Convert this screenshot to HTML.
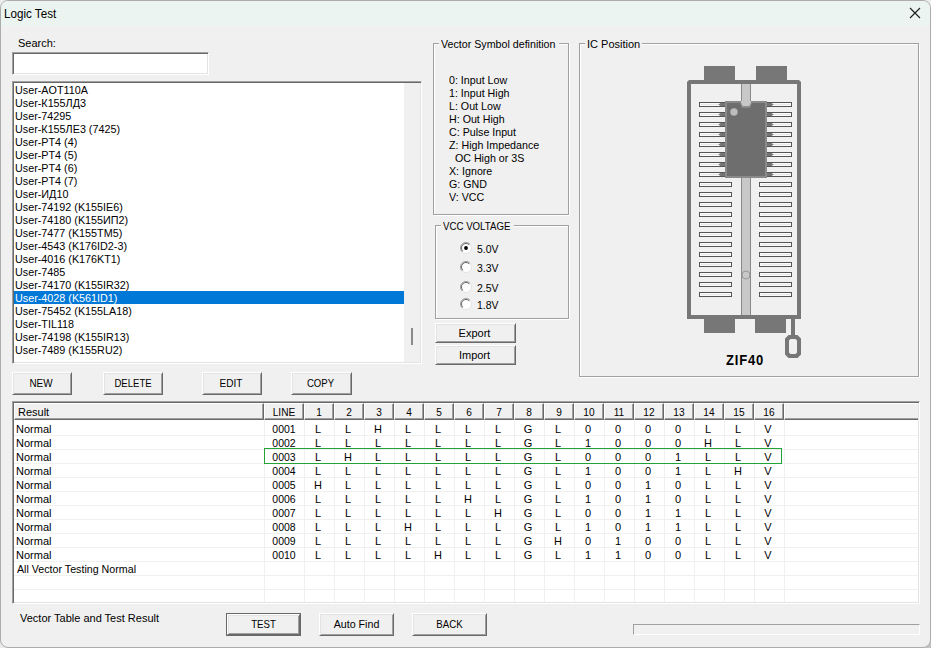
<!DOCTYPE html><html><head><meta charset="utf-8"><style>
html,body{margin:0;padding:0;}
body{width:931px;height:648px;position:relative;overflow:hidden;background:#ececec;font-family:'Liberation Sans', sans-serif;}
.t{position:absolute;white-space:nowrap;line-height:13px;font-family:'Liberation Sans', sans-serif;color:#000;}
</style></head><body>
<div style="position:absolute;left:905px;top:622px;width:26px;height:26px;background:#c2c2c2;"></div>
<div style="position:absolute;left:0px;top:0px;width:931px;height:648px;box-sizing:border-box;border:1px solid #acacac;border-radius:8px;background:#f0f0f0;overflow:hidden;"></div>
<div style="position:absolute;left:1px;top:1px;width:929px;height:25px;background:#ebf4f0;border-radius:7px 7px 0 0;"></div>
<div class="t" style="left:4px;top:7px;font-size:12px;line-height:14px;transform:scaleX(0.97);transform-origin:0 0;">Logic Test</div>
<svg style="position:absolute;left:0;top:0" width="931" height="30"><path d="M910 8 L920 18 M920 8 L910 18" stroke="#1b1b1b" stroke-width="1.1" fill="none"/></svg>
<div class="t" style="left:18px;top:37px;font-size:11px;font-weight:normal;color:#000;">Search:</div>
<div style="position:absolute;left:12px;top:52px;width:197px;height:23px;box-sizing:border-box;border-style:solid;border-width:1px;border-color:#a0a0a0 #fff #fff #a0a0a0;background:#fff;box-shadow:inset 1px 1px 0 #696969, inset -1px -1px 0 #e3e3e3;"></div>
<div style="position:absolute;left:12px;top:81px;width:410px;height:283px;box-sizing:border-box;border-style:solid;border-width:1px;border-color:#a0a0a0 #fff #fff #a0a0a0;background:#fff;box-shadow:inset 1px 1px 0 #696969, inset -1px -1px 0 #e3e3e3;"></div>
<div style="position:absolute;left:404px;top:83px;width:16px;height:279px;background:#f0f0f0;"></div>
<div style="position:absolute;left:411px;top:328px;width:2px;height:17px;background:#8a8a8a;"></div>
<div class="t" style="left:15px;top:84px;font-size:11px;transform:scaleX(0.98);transform-origin:0 0;">User-AOT110A</div>
<div class="t" style="left:15px;top:97px;font-size:11px;transform:scaleX(0.98);transform-origin:0 0;">User-К155ЛД3</div>
<div class="t" style="left:15px;top:110px;font-size:11px;transform:scaleX(0.98);transform-origin:0 0;">User-74295</div>
<div class="t" style="left:15px;top:123px;font-size:11px;transform:scaleX(0.98);transform-origin:0 0;">User-К155ЛЕ3 (7425)</div>
<div class="t" style="left:15px;top:136px;font-size:11px;transform:scaleX(0.98);transform-origin:0 0;">User-PT4 (4)</div>
<div class="t" style="left:15px;top:149px;font-size:11px;transform:scaleX(0.98);transform-origin:0 0;">User-PT4 (5)</div>
<div class="t" style="left:15px;top:162px;font-size:11px;transform:scaleX(0.98);transform-origin:0 0;">User-PT4 (6)</div>
<div class="t" style="left:15px;top:175px;font-size:11px;transform:scaleX(0.98);transform-origin:0 0;">User-PT4 (7)</div>
<div class="t" style="left:15px;top:188px;font-size:11px;transform:scaleX(0.98);transform-origin:0 0;">User-ИД10</div>
<div class="t" style="left:15px;top:201px;font-size:11px;transform:scaleX(0.98);transform-origin:0 0;">User-74192 (K155IE6)</div>
<div class="t" style="left:15px;top:214px;font-size:11px;transform:scaleX(0.98);transform-origin:0 0;">User-74180 (K155ИП2)</div>
<div class="t" style="left:15px;top:227px;font-size:11px;transform:scaleX(0.98);transform-origin:0 0;">User-7477 (K155TM5)</div>
<div class="t" style="left:15px;top:240px;font-size:11px;transform:scaleX(0.98);transform-origin:0 0;">User-4543 (K176ID2-3)</div>
<div class="t" style="left:15px;top:253px;font-size:11px;transform:scaleX(0.98);transform-origin:0 0;">User-4016 (K176KT1)</div>
<div class="t" style="left:15px;top:266px;font-size:11px;transform:scaleX(0.98);transform-origin:0 0;">User-7485</div>
<div class="t" style="left:15px;top:279px;font-size:11px;transform:scaleX(0.98);transform-origin:0 0;">User-74170 (K155IR32)</div>
<div style="position:absolute;left:14px;top:291px;width:390px;height:13px;background:#0078d7;"></div>
<div class="t" style="left:15px;top:292px;font-size:11px;color:#fff;transform:scaleX(0.98);transform-origin:0 0;">User-4028 (K561ID1)</div>
<div class="t" style="left:15px;top:305px;font-size:11px;transform:scaleX(0.98);transform-origin:0 0;">User-75452 (K155LA18)</div>
<div class="t" style="left:15px;top:318px;font-size:11px;transform:scaleX(0.98);transform-origin:0 0;">User-TIL118</div>
<div class="t" style="left:15px;top:331px;font-size:11px;transform:scaleX(0.98);transform-origin:0 0;">User-74198 (K155IR13)</div>
<div class="t" style="left:15px;top:344px;font-size:11px;transform:scaleX(0.98);transform-origin:0 0;">User-7489 (K155RU2)</div>
<div style="position:absolute;left:434px;top:44px;width:136px;height:172px;box-sizing:border-box;border:1px solid #fff;"></div>
<div style="position:absolute;left:433px;top:43px;width:136px;height:172px;box-sizing:border-box;border:1px solid #a0a0a0;"></div>
<div style="position:absolute;left:439px;top:42px;width:120px;height:4px;background:#f0f0f0;"></div>
<div class="t" style="left:441px;top:38px;font-size:11px;font-weight:normal;color:#000;transform:scaleX(0.97);transform-origin:0 0;">Vector Symbol definition</div>
<div class="t" style="left:449px;top:74px;font-size:11px;font-weight:normal;color:#000;transform:scaleX(0.97);transform-origin:0 0;">0: Input Low</div>
<div class="t" style="left:449px;top:87px;font-size:11px;font-weight:normal;color:#000;transform:scaleX(0.97);transform-origin:0 0;">1: Input High</div>
<div class="t" style="left:449px;top:100px;font-size:11px;font-weight:normal;color:#000;transform:scaleX(0.97);transform-origin:0 0;">L: Out Low</div>
<div class="t" style="left:449px;top:113px;font-size:11px;font-weight:normal;color:#000;transform:scaleX(0.97);transform-origin:0 0;">H: Out High</div>
<div class="t" style="left:449px;top:126px;font-size:11px;font-weight:normal;color:#000;transform:scaleX(0.97);transform-origin:0 0;">C: Pulse Input</div>
<div class="t" style="left:449px;top:139px;font-size:11px;font-weight:normal;color:#000;transform:scaleX(0.97);transform-origin:0 0;">Z: High Impedance</div>
<div class="t" style="left:449px;top:152px;font-size:11px;font-weight:normal;color:#000;transform:scaleX(0.97);transform-origin:0 0;">&nbsp;&nbsp;OC High or 3S</div>
<div class="t" style="left:449px;top:165px;font-size:11px;font-weight:normal;color:#000;transform:scaleX(0.97);transform-origin:0 0;">X: Ignore</div>
<div class="t" style="left:449px;top:178px;font-size:11px;font-weight:normal;color:#000;transform:scaleX(0.97);transform-origin:0 0;">G: GND</div>
<div class="t" style="left:449px;top:191px;font-size:11px;font-weight:normal;color:#000;transform:scaleX(0.97);transform-origin:0 0;">V: VCC</div>
<div style="position:absolute;left:436px;top:226px;width:134px;height:94px;box-sizing:border-box;border:1px solid #fff;"></div>
<div style="position:absolute;left:435px;top:225px;width:134px;height:94px;box-sizing:border-box;border:1px solid #a0a0a0;"></div>
<div style="position:absolute;left:441px;top:224px;width:73px;height:4px;background:#f0f0f0;"></div>
<div class="t" style="left:443px;top:220px;font-size:11px;font-weight:normal;color:#000;transform:scaleX(0.88);transform-origin:0 0;">VCC VOLTAGE</div>
<svg style="position:absolute;left:459px;top:241px" width="14" height="14" viewBox="0 0 14 14">
<circle cx="7" cy="7" r="5.5" fill="#fff" stroke="#e3e3e3" stroke-width="1"/>
<path d="M3.1 10.9 A5.5 5.5 0 0 1 10.9 3.1" stroke="#a0a0a0" stroke-width="1" fill="none"/>
<path d="M3.8 10.2 A4.5 4.5 0 0 1 10.2 3.8" stroke="#696969" stroke-width="1" fill="none"/>
<circle cx="7" cy="7" r="1.9" fill="#000"/>
</svg>
<div class="t" style="left:477px;top:243px;font-size:11px;font-weight:normal;color:#000;transform:scaleX(0.95);transform-origin:0 0;">5.0V</div>
<svg style="position:absolute;left:459px;top:260px" width="14" height="14" viewBox="0 0 14 14">
<circle cx="7" cy="7" r="5.5" fill="#fff" stroke="#e3e3e3" stroke-width="1"/>
<path d="M3.1 10.9 A5.5 5.5 0 0 1 10.9 3.1" stroke="#a0a0a0" stroke-width="1" fill="none"/>
<path d="M3.8 10.2 A4.5 4.5 0 0 1 10.2 3.8" stroke="#696969" stroke-width="1" fill="none"/>

</svg>
<div class="t" style="left:477px;top:262px;font-size:11px;font-weight:normal;color:#000;transform:scaleX(0.95);transform-origin:0 0;">3.3V</div>
<svg style="position:absolute;left:459px;top:280px" width="14" height="14" viewBox="0 0 14 14">
<circle cx="7" cy="7" r="5.5" fill="#fff" stroke="#e3e3e3" stroke-width="1"/>
<path d="M3.1 10.9 A5.5 5.5 0 0 1 10.9 3.1" stroke="#a0a0a0" stroke-width="1" fill="none"/>
<path d="M3.8 10.2 A4.5 4.5 0 0 1 10.2 3.8" stroke="#696969" stroke-width="1" fill="none"/>

</svg>
<div class="t" style="left:477px;top:282px;font-size:11px;font-weight:normal;color:#000;transform:scaleX(0.95);transform-origin:0 0;">2.5V</div>
<svg style="position:absolute;left:459px;top:297px" width="14" height="14" viewBox="0 0 14 14">
<circle cx="7" cy="7" r="5.5" fill="#fff" stroke="#e3e3e3" stroke-width="1"/>
<path d="M3.1 10.9 A5.5 5.5 0 0 1 10.9 3.1" stroke="#a0a0a0" stroke-width="1" fill="none"/>
<path d="M3.8 10.2 A4.5 4.5 0 0 1 10.2 3.8" stroke="#696969" stroke-width="1" fill="none"/>

</svg>
<div class="t" style="left:477px;top:299px;font-size:11px;font-weight:normal;color:#000;transform:scaleX(0.95);transform-origin:0 0;">1.8V</div>
<div style="position:absolute;left:435px;top:323px;width:81px;height:20px;box-sizing:border-box;border-style:solid;border-width:1px;border-color:#fff #696969 #696969 #fff;background:#f0f0f0;box-shadow:inset 1px 1px 0 #e3e3e3, inset -1px -1px 0 #a0a0a0;"></div>
<div class="t" style="left:434.0px;width:81px;text-align:center;top:327px;font-size:11px;font-weight:normal;">Export</div>
<div style="position:absolute;left:435px;top:345px;width:81px;height:20px;box-sizing:border-box;border-style:solid;border-width:1px;border-color:#fff #696969 #696969 #fff;background:#f0f0f0;box-shadow:inset 1px 1px 0 #e3e3e3, inset -1px -1px 0 #a0a0a0;"></div>
<div class="t" style="left:434.0px;width:81px;text-align:center;top:349px;font-size:11px;font-weight:normal;">Import</div>
<div style="position:absolute;left:580px;top:44px;width:340px;height:334px;box-sizing:border-box;border:1px solid #fff;"></div>
<div style="position:absolute;left:579px;top:43px;width:340px;height:334px;box-sizing:border-box;border:1px solid #a0a0a0;"></div>
<div style="position:absolute;left:585px;top:42px;width:57px;height:4px;background:#f0f0f0;"></div>
<div class="t" style="left:587px;top:38px;font-size:11px;font-weight:normal;color:#000;">IC Position</div>
<div style="position:absolute;left:12px;top:372px;width:60px;height:23px;box-sizing:border-box;border-style:solid;border-width:1px;border-color:#fff #696969 #696969 #fff;background:#f0f0f0;box-shadow:inset 1px 1px 0 #e3e3e3, inset -1px -1px 0 #a0a0a0;"></div>
<div class="t" style="left:11.0px;width:60px;text-align:center;top:377px;font-size:11px;font-weight:normal;transform:scaleX(0.9);">NEW</div>
<div style="position:absolute;left:103px;top:372px;width:60px;height:23px;box-sizing:border-box;border-style:solid;border-width:1px;border-color:#fff #696969 #696969 #fff;background:#f0f0f0;box-shadow:inset 1px 1px 0 #e3e3e3, inset -1px -1px 0 #a0a0a0;"></div>
<div class="t" style="left:102.5px;width:60px;text-align:center;top:377px;font-size:11px;font-weight:normal;transform:scaleX(0.87);">DELETE</div>
<div style="position:absolute;left:202px;top:372px;width:60px;height:23px;box-sizing:border-box;border-style:solid;border-width:1px;border-color:#fff #696969 #696969 #fff;background:#f0f0f0;box-shadow:inset 1px 1px 0 #e3e3e3, inset -1px -1px 0 #a0a0a0;"></div>
<div class="t" style="left:201.0px;width:60px;text-align:center;top:377px;font-size:11px;font-weight:normal;transform:scaleX(0.91);">EDIT</div>
<div style="position:absolute;left:291px;top:372px;width:61px;height:23px;box-sizing:border-box;border-style:solid;border-width:1px;border-color:#fff #696969 #696969 #fff;background:#f0f0f0;box-shadow:inset 1px 1px 0 #e3e3e3, inset -1px -1px 0 #a0a0a0;"></div>
<div class="t" style="left:290.0px;width:61px;text-align:center;top:377px;font-size:11px;font-weight:normal;transform:scaleX(0.87);">COPY</div>
<div style="position:absolute;left:12px;top:401px;width:908px;height:203px;box-sizing:border-box;border-style:solid;border-width:1px;border-color:#a0a0a0 #fff #fff #a0a0a0;background:#fff;box-shadow:inset 1px 1px 0 #696969, inset -1px -1px 0 #e3e3e3;"></div>
<div style="position:absolute;left:14px;top:403px;width:250px;height:17px;box-sizing:border-box;border-style:solid;border-width:1px;border-color:#fff #696969 #696969 #fff;background:#f0f0f0;box-shadow:inset -1px -1px 0 #a0a0a0;"></div>
<div class="t" style="left:18px;top:406px;font-size:11px;font-weight:normal;color:#000;">Result</div>
<div style="position:absolute;left:264px;top:403px;width:40px;height:17px;box-sizing:border-box;border-style:solid;border-width:1px;border-color:#fff #696969 #696969 #fff;background:#f0f0f0;box-shadow:inset -1px -1px 0 #a0a0a0;"></div>
<div class="t" style="left:264.0px;width:40px;text-align:center;top:406px;font-size:11px;font-weight:normal;transform:scaleX(0.92);">LINE</div>
<div style="position:absolute;left:304px;top:403px;width:30px;height:17px;box-sizing:border-box;border-style:solid;border-width:1px;border-color:#fff #696969 #696969 #fff;background:#f0f0f0;box-shadow:inset -1px -1px 0 #a0a0a0;"></div>
<div class="t" style="left:304.0px;width:30px;text-align:center;top:406px;font-size:11px;font-weight:normal;transform:scaleX(0.92);">1</div>
<div style="position:absolute;left:334px;top:403px;width:30px;height:17px;box-sizing:border-box;border-style:solid;border-width:1px;border-color:#fff #696969 #696969 #fff;background:#f0f0f0;box-shadow:inset -1px -1px 0 #a0a0a0;"></div>
<div class="t" style="left:334.0px;width:30px;text-align:center;top:406px;font-size:11px;font-weight:normal;transform:scaleX(0.92);">2</div>
<div style="position:absolute;left:364px;top:403px;width:30px;height:17px;box-sizing:border-box;border-style:solid;border-width:1px;border-color:#fff #696969 #696969 #fff;background:#f0f0f0;box-shadow:inset -1px -1px 0 #a0a0a0;"></div>
<div class="t" style="left:364.0px;width:30px;text-align:center;top:406px;font-size:11px;font-weight:normal;transform:scaleX(0.92);">3</div>
<div style="position:absolute;left:394px;top:403px;width:30px;height:17px;box-sizing:border-box;border-style:solid;border-width:1px;border-color:#fff #696969 #696969 #fff;background:#f0f0f0;box-shadow:inset -1px -1px 0 #a0a0a0;"></div>
<div class="t" style="left:394.0px;width:30px;text-align:center;top:406px;font-size:11px;font-weight:normal;transform:scaleX(0.92);">4</div>
<div style="position:absolute;left:424px;top:403px;width:30px;height:17px;box-sizing:border-box;border-style:solid;border-width:1px;border-color:#fff #696969 #696969 #fff;background:#f0f0f0;box-shadow:inset -1px -1px 0 #a0a0a0;"></div>
<div class="t" style="left:424.0px;width:30px;text-align:center;top:406px;font-size:11px;font-weight:normal;transform:scaleX(0.92);">5</div>
<div style="position:absolute;left:454px;top:403px;width:30px;height:17px;box-sizing:border-box;border-style:solid;border-width:1px;border-color:#fff #696969 #696969 #fff;background:#f0f0f0;box-shadow:inset -1px -1px 0 #a0a0a0;"></div>
<div class="t" style="left:454.0px;width:30px;text-align:center;top:406px;font-size:11px;font-weight:normal;transform:scaleX(0.92);">6</div>
<div style="position:absolute;left:484px;top:403px;width:30px;height:17px;box-sizing:border-box;border-style:solid;border-width:1px;border-color:#fff #696969 #696969 #fff;background:#f0f0f0;box-shadow:inset -1px -1px 0 #a0a0a0;"></div>
<div class="t" style="left:484.0px;width:30px;text-align:center;top:406px;font-size:11px;font-weight:normal;transform:scaleX(0.92);">7</div>
<div style="position:absolute;left:514px;top:403px;width:30px;height:17px;box-sizing:border-box;border-style:solid;border-width:1px;border-color:#fff #696969 #696969 #fff;background:#f0f0f0;box-shadow:inset -1px -1px 0 #a0a0a0;"></div>
<div class="t" style="left:514.0px;width:30px;text-align:center;top:406px;font-size:11px;font-weight:normal;transform:scaleX(0.92);">8</div>
<div style="position:absolute;left:544px;top:403px;width:30px;height:17px;box-sizing:border-box;border-style:solid;border-width:1px;border-color:#fff #696969 #696969 #fff;background:#f0f0f0;box-shadow:inset -1px -1px 0 #a0a0a0;"></div>
<div class="t" style="left:544.0px;width:30px;text-align:center;top:406px;font-size:11px;font-weight:normal;transform:scaleX(0.92);">9</div>
<div style="position:absolute;left:574px;top:403px;width:30px;height:17px;box-sizing:border-box;border-style:solid;border-width:1px;border-color:#fff #696969 #696969 #fff;background:#f0f0f0;box-shadow:inset -1px -1px 0 #a0a0a0;"></div>
<div class="t" style="left:574.0px;width:30px;text-align:center;top:406px;font-size:11px;font-weight:normal;transform:scaleX(0.92);">10</div>
<div style="position:absolute;left:604px;top:403px;width:30px;height:17px;box-sizing:border-box;border-style:solid;border-width:1px;border-color:#fff #696969 #696969 #fff;background:#f0f0f0;box-shadow:inset -1px -1px 0 #a0a0a0;"></div>
<div class="t" style="left:604.0px;width:30px;text-align:center;top:406px;font-size:11px;font-weight:normal;transform:scaleX(0.92);">11</div>
<div style="position:absolute;left:634px;top:403px;width:30px;height:17px;box-sizing:border-box;border-style:solid;border-width:1px;border-color:#fff #696969 #696969 #fff;background:#f0f0f0;box-shadow:inset -1px -1px 0 #a0a0a0;"></div>
<div class="t" style="left:634.0px;width:30px;text-align:center;top:406px;font-size:11px;font-weight:normal;transform:scaleX(0.92);">12</div>
<div style="position:absolute;left:664px;top:403px;width:30px;height:17px;box-sizing:border-box;border-style:solid;border-width:1px;border-color:#fff #696969 #696969 #fff;background:#f0f0f0;box-shadow:inset -1px -1px 0 #a0a0a0;"></div>
<div class="t" style="left:664.0px;width:30px;text-align:center;top:406px;font-size:11px;font-weight:normal;transform:scaleX(0.92);">13</div>
<div style="position:absolute;left:694px;top:403px;width:30px;height:17px;box-sizing:border-box;border-style:solid;border-width:1px;border-color:#fff #696969 #696969 #fff;background:#f0f0f0;box-shadow:inset -1px -1px 0 #a0a0a0;"></div>
<div class="t" style="left:694.0px;width:30px;text-align:center;top:406px;font-size:11px;font-weight:normal;transform:scaleX(0.92);">14</div>
<div style="position:absolute;left:724px;top:403px;width:30px;height:17px;box-sizing:border-box;border-style:solid;border-width:1px;border-color:#fff #696969 #696969 #fff;background:#f0f0f0;box-shadow:inset -1px -1px 0 #a0a0a0;"></div>
<div class="t" style="left:724.0px;width:30px;text-align:center;top:406px;font-size:11px;font-weight:normal;transform:scaleX(0.92);">15</div>
<div style="position:absolute;left:754px;top:403px;width:30px;height:17px;box-sizing:border-box;border-style:solid;border-width:1px;border-color:#fff #696969 #696969 #fff;background:#f0f0f0;box-shadow:inset -1px -1px 0 #a0a0a0;"></div>
<div class="t" style="left:754.0px;width:30px;text-align:center;top:406px;font-size:11px;font-weight:normal;transform:scaleX(0.92);">16</div>
<div style="position:absolute;left:784px;top:403px;width:134px;height:17px;box-sizing:border-box;border-style:solid;border-width:1px 0 1px 1px;border-color:#fff #696969 #696969 #fff;background:#f0f0f0;box-shadow:inset 0 -1px 0 #a0a0a0;"></div>
<div style="position:absolute;left:14px;top:435px;width:904px;height:1px;background:#f0f0f0"></div><div style="position:absolute;left:14px;top:449px;width:904px;height:1px;background:#f0f0f0"></div><div style="position:absolute;left:14px;top:463px;width:904px;height:1px;background:#f0f0f0"></div><div style="position:absolute;left:14px;top:477px;width:904px;height:1px;background:#f0f0f0"></div><div style="position:absolute;left:14px;top:491px;width:904px;height:1px;background:#f0f0f0"></div><div style="position:absolute;left:14px;top:505px;width:904px;height:1px;background:#f0f0f0"></div><div style="position:absolute;left:14px;top:519px;width:904px;height:1px;background:#f0f0f0"></div><div style="position:absolute;left:14px;top:533px;width:904px;height:1px;background:#f0f0f0"></div><div style="position:absolute;left:14px;top:547px;width:904px;height:1px;background:#f0f0f0"></div><div style="position:absolute;left:14px;top:561px;width:904px;height:1px;background:#f0f0f0"></div><div style="position:absolute;left:14px;top:575px;width:904px;height:1px;background:#f0f0f0"></div><div style="position:absolute;left:14px;top:589px;width:904px;height:1px;background:#f0f0f0"></div><div style="position:absolute;left:264px;top:420px;width:1px;height:182px;background:#f0f0f0"></div><div style="position:absolute;left:304px;top:420px;width:1px;height:182px;background:#f0f0f0"></div><div style="position:absolute;left:334px;top:420px;width:1px;height:182px;background:#f0f0f0"></div><div style="position:absolute;left:364px;top:420px;width:1px;height:182px;background:#f0f0f0"></div><div style="position:absolute;left:394px;top:420px;width:1px;height:182px;background:#f0f0f0"></div><div style="position:absolute;left:424px;top:420px;width:1px;height:182px;background:#f0f0f0"></div><div style="position:absolute;left:454px;top:420px;width:1px;height:182px;background:#f0f0f0"></div><div style="position:absolute;left:484px;top:420px;width:1px;height:182px;background:#f0f0f0"></div><div style="position:absolute;left:514px;top:420px;width:1px;height:182px;background:#f0f0f0"></div><div style="position:absolute;left:544px;top:420px;width:1px;height:182px;background:#f0f0f0"></div><div style="position:absolute;left:574px;top:420px;width:1px;height:182px;background:#f0f0f0"></div><div style="position:absolute;left:604px;top:420px;width:1px;height:182px;background:#f0f0f0"></div><div style="position:absolute;left:634px;top:420px;width:1px;height:182px;background:#f0f0f0"></div><div style="position:absolute;left:664px;top:420px;width:1px;height:182px;background:#f0f0f0"></div><div style="position:absolute;left:694px;top:420px;width:1px;height:182px;background:#f0f0f0"></div><div style="position:absolute;left:724px;top:420px;width:1px;height:182px;background:#f0f0f0"></div><div style="position:absolute;left:754px;top:420px;width:1px;height:182px;background:#f0f0f0"></div><div style="position:absolute;left:784px;top:420px;width:1px;height:182px;background:#f0f0f0"></div>
<div class="t" style="left:16px;top:423px;font-size:11px;font-weight:normal;color:#000;">Normal</div>
<div class="t" style="left:264.0px;width:40px;text-align:center;top:423px;font-size:11px;font-weight:normal;transform:scaleX(0.95);">0001</div>
<div class="t" style="left:303.0px;width:30px;text-align:center;top:423px;font-size:11px;font-weight:normal;">L</div>
<div class="t" style="left:333.0px;width:30px;text-align:center;top:423px;font-size:11px;font-weight:normal;">L</div>
<div class="t" style="left:363.0px;width:30px;text-align:center;top:423px;font-size:11px;font-weight:normal;">H</div>
<div class="t" style="left:393.0px;width:30px;text-align:center;top:423px;font-size:11px;font-weight:normal;">L</div>
<div class="t" style="left:423.0px;width:30px;text-align:center;top:423px;font-size:11px;font-weight:normal;">L</div>
<div class="t" style="left:453.0px;width:30px;text-align:center;top:423px;font-size:11px;font-weight:normal;">L</div>
<div class="t" style="left:483.0px;width:30px;text-align:center;top:423px;font-size:11px;font-weight:normal;">L</div>
<div class="t" style="left:513.0px;width:30px;text-align:center;top:423px;font-size:11px;font-weight:normal;">G</div>
<div class="t" style="left:543.0px;width:30px;text-align:center;top:423px;font-size:11px;font-weight:normal;">L</div>
<div class="t" style="left:573.0px;width:30px;text-align:center;top:423px;font-size:11px;font-weight:normal;">0</div>
<div class="t" style="left:603.0px;width:30px;text-align:center;top:423px;font-size:11px;font-weight:normal;">0</div>
<div class="t" style="left:633.0px;width:30px;text-align:center;top:423px;font-size:11px;font-weight:normal;">0</div>
<div class="t" style="left:663.0px;width:30px;text-align:center;top:423px;font-size:11px;font-weight:normal;">0</div>
<div class="t" style="left:693.0px;width:30px;text-align:center;top:423px;font-size:11px;font-weight:normal;">L</div>
<div class="t" style="left:723.0px;width:30px;text-align:center;top:423px;font-size:11px;font-weight:normal;">L</div>
<div class="t" style="left:753.0px;width:30px;text-align:center;top:423px;font-size:11px;font-weight:normal;">V</div>
<div class="t" style="left:16px;top:437px;font-size:11px;font-weight:normal;color:#000;">Normal</div>
<div class="t" style="left:264.0px;width:40px;text-align:center;top:437px;font-size:11px;font-weight:normal;transform:scaleX(0.95);">0002</div>
<div class="t" style="left:303.0px;width:30px;text-align:center;top:437px;font-size:11px;font-weight:normal;">L</div>
<div class="t" style="left:333.0px;width:30px;text-align:center;top:437px;font-size:11px;font-weight:normal;">L</div>
<div class="t" style="left:363.0px;width:30px;text-align:center;top:437px;font-size:11px;font-weight:normal;">L</div>
<div class="t" style="left:393.0px;width:30px;text-align:center;top:437px;font-size:11px;font-weight:normal;">L</div>
<div class="t" style="left:423.0px;width:30px;text-align:center;top:437px;font-size:11px;font-weight:normal;">L</div>
<div class="t" style="left:453.0px;width:30px;text-align:center;top:437px;font-size:11px;font-weight:normal;">L</div>
<div class="t" style="left:483.0px;width:30px;text-align:center;top:437px;font-size:11px;font-weight:normal;">L</div>
<div class="t" style="left:513.0px;width:30px;text-align:center;top:437px;font-size:11px;font-weight:normal;">G</div>
<div class="t" style="left:543.0px;width:30px;text-align:center;top:437px;font-size:11px;font-weight:normal;">L</div>
<div class="t" style="left:573.0px;width:30px;text-align:center;top:437px;font-size:11px;font-weight:normal;">1</div>
<div class="t" style="left:603.0px;width:30px;text-align:center;top:437px;font-size:11px;font-weight:normal;">0</div>
<div class="t" style="left:633.0px;width:30px;text-align:center;top:437px;font-size:11px;font-weight:normal;">0</div>
<div class="t" style="left:663.0px;width:30px;text-align:center;top:437px;font-size:11px;font-weight:normal;">0</div>
<div class="t" style="left:693.0px;width:30px;text-align:center;top:437px;font-size:11px;font-weight:normal;">H</div>
<div class="t" style="left:723.0px;width:30px;text-align:center;top:437px;font-size:11px;font-weight:normal;">L</div>
<div class="t" style="left:753.0px;width:30px;text-align:center;top:437px;font-size:11px;font-weight:normal;">V</div>
<div class="t" style="left:16px;top:451px;font-size:11px;font-weight:normal;color:#000;">Normal</div>
<div class="t" style="left:264.0px;width:40px;text-align:center;top:451px;font-size:11px;font-weight:normal;transform:scaleX(0.95);">0003</div>
<div class="t" style="left:303.0px;width:30px;text-align:center;top:451px;font-size:11px;font-weight:normal;">L</div>
<div class="t" style="left:333.0px;width:30px;text-align:center;top:451px;font-size:11px;font-weight:normal;">H</div>
<div class="t" style="left:363.0px;width:30px;text-align:center;top:451px;font-size:11px;font-weight:normal;">L</div>
<div class="t" style="left:393.0px;width:30px;text-align:center;top:451px;font-size:11px;font-weight:normal;">L</div>
<div class="t" style="left:423.0px;width:30px;text-align:center;top:451px;font-size:11px;font-weight:normal;">L</div>
<div class="t" style="left:453.0px;width:30px;text-align:center;top:451px;font-size:11px;font-weight:normal;">L</div>
<div class="t" style="left:483.0px;width:30px;text-align:center;top:451px;font-size:11px;font-weight:normal;">L</div>
<div class="t" style="left:513.0px;width:30px;text-align:center;top:451px;font-size:11px;font-weight:normal;">G</div>
<div class="t" style="left:543.0px;width:30px;text-align:center;top:451px;font-size:11px;font-weight:normal;">L</div>
<div class="t" style="left:573.0px;width:30px;text-align:center;top:451px;font-size:11px;font-weight:normal;">0</div>
<div class="t" style="left:603.0px;width:30px;text-align:center;top:451px;font-size:11px;font-weight:normal;">0</div>
<div class="t" style="left:633.0px;width:30px;text-align:center;top:451px;font-size:11px;font-weight:normal;">0</div>
<div class="t" style="left:663.0px;width:30px;text-align:center;top:451px;font-size:11px;font-weight:normal;">1</div>
<div class="t" style="left:693.0px;width:30px;text-align:center;top:451px;font-size:11px;font-weight:normal;">L</div>
<div class="t" style="left:723.0px;width:30px;text-align:center;top:451px;font-size:11px;font-weight:normal;">L</div>
<div class="t" style="left:753.0px;width:30px;text-align:center;top:451px;font-size:11px;font-weight:normal;">V</div>
<div class="t" style="left:16px;top:465px;font-size:11px;font-weight:normal;color:#000;">Normal</div>
<div class="t" style="left:264.0px;width:40px;text-align:center;top:465px;font-size:11px;font-weight:normal;transform:scaleX(0.95);">0004</div>
<div class="t" style="left:303.0px;width:30px;text-align:center;top:465px;font-size:11px;font-weight:normal;">L</div>
<div class="t" style="left:333.0px;width:30px;text-align:center;top:465px;font-size:11px;font-weight:normal;">L</div>
<div class="t" style="left:363.0px;width:30px;text-align:center;top:465px;font-size:11px;font-weight:normal;">L</div>
<div class="t" style="left:393.0px;width:30px;text-align:center;top:465px;font-size:11px;font-weight:normal;">L</div>
<div class="t" style="left:423.0px;width:30px;text-align:center;top:465px;font-size:11px;font-weight:normal;">L</div>
<div class="t" style="left:453.0px;width:30px;text-align:center;top:465px;font-size:11px;font-weight:normal;">L</div>
<div class="t" style="left:483.0px;width:30px;text-align:center;top:465px;font-size:11px;font-weight:normal;">L</div>
<div class="t" style="left:513.0px;width:30px;text-align:center;top:465px;font-size:11px;font-weight:normal;">G</div>
<div class="t" style="left:543.0px;width:30px;text-align:center;top:465px;font-size:11px;font-weight:normal;">L</div>
<div class="t" style="left:573.0px;width:30px;text-align:center;top:465px;font-size:11px;font-weight:normal;">1</div>
<div class="t" style="left:603.0px;width:30px;text-align:center;top:465px;font-size:11px;font-weight:normal;">0</div>
<div class="t" style="left:633.0px;width:30px;text-align:center;top:465px;font-size:11px;font-weight:normal;">0</div>
<div class="t" style="left:663.0px;width:30px;text-align:center;top:465px;font-size:11px;font-weight:normal;">1</div>
<div class="t" style="left:693.0px;width:30px;text-align:center;top:465px;font-size:11px;font-weight:normal;">L</div>
<div class="t" style="left:723.0px;width:30px;text-align:center;top:465px;font-size:11px;font-weight:normal;">H</div>
<div class="t" style="left:753.0px;width:30px;text-align:center;top:465px;font-size:11px;font-weight:normal;">V</div>
<div class="t" style="left:16px;top:479px;font-size:11px;font-weight:normal;color:#000;">Normal</div>
<div class="t" style="left:264.0px;width:40px;text-align:center;top:479px;font-size:11px;font-weight:normal;transform:scaleX(0.95);">0005</div>
<div class="t" style="left:303.0px;width:30px;text-align:center;top:479px;font-size:11px;font-weight:normal;">H</div>
<div class="t" style="left:333.0px;width:30px;text-align:center;top:479px;font-size:11px;font-weight:normal;">L</div>
<div class="t" style="left:363.0px;width:30px;text-align:center;top:479px;font-size:11px;font-weight:normal;">L</div>
<div class="t" style="left:393.0px;width:30px;text-align:center;top:479px;font-size:11px;font-weight:normal;">L</div>
<div class="t" style="left:423.0px;width:30px;text-align:center;top:479px;font-size:11px;font-weight:normal;">L</div>
<div class="t" style="left:453.0px;width:30px;text-align:center;top:479px;font-size:11px;font-weight:normal;">L</div>
<div class="t" style="left:483.0px;width:30px;text-align:center;top:479px;font-size:11px;font-weight:normal;">L</div>
<div class="t" style="left:513.0px;width:30px;text-align:center;top:479px;font-size:11px;font-weight:normal;">G</div>
<div class="t" style="left:543.0px;width:30px;text-align:center;top:479px;font-size:11px;font-weight:normal;">L</div>
<div class="t" style="left:573.0px;width:30px;text-align:center;top:479px;font-size:11px;font-weight:normal;">0</div>
<div class="t" style="left:603.0px;width:30px;text-align:center;top:479px;font-size:11px;font-weight:normal;">0</div>
<div class="t" style="left:633.0px;width:30px;text-align:center;top:479px;font-size:11px;font-weight:normal;">1</div>
<div class="t" style="left:663.0px;width:30px;text-align:center;top:479px;font-size:11px;font-weight:normal;">0</div>
<div class="t" style="left:693.0px;width:30px;text-align:center;top:479px;font-size:11px;font-weight:normal;">L</div>
<div class="t" style="left:723.0px;width:30px;text-align:center;top:479px;font-size:11px;font-weight:normal;">L</div>
<div class="t" style="left:753.0px;width:30px;text-align:center;top:479px;font-size:11px;font-weight:normal;">V</div>
<div class="t" style="left:16px;top:493px;font-size:11px;font-weight:normal;color:#000;">Normal</div>
<div class="t" style="left:264.0px;width:40px;text-align:center;top:493px;font-size:11px;font-weight:normal;transform:scaleX(0.95);">0006</div>
<div class="t" style="left:303.0px;width:30px;text-align:center;top:493px;font-size:11px;font-weight:normal;">L</div>
<div class="t" style="left:333.0px;width:30px;text-align:center;top:493px;font-size:11px;font-weight:normal;">L</div>
<div class="t" style="left:363.0px;width:30px;text-align:center;top:493px;font-size:11px;font-weight:normal;">L</div>
<div class="t" style="left:393.0px;width:30px;text-align:center;top:493px;font-size:11px;font-weight:normal;">L</div>
<div class="t" style="left:423.0px;width:30px;text-align:center;top:493px;font-size:11px;font-weight:normal;">L</div>
<div class="t" style="left:453.0px;width:30px;text-align:center;top:493px;font-size:11px;font-weight:normal;">H</div>
<div class="t" style="left:483.0px;width:30px;text-align:center;top:493px;font-size:11px;font-weight:normal;">L</div>
<div class="t" style="left:513.0px;width:30px;text-align:center;top:493px;font-size:11px;font-weight:normal;">G</div>
<div class="t" style="left:543.0px;width:30px;text-align:center;top:493px;font-size:11px;font-weight:normal;">L</div>
<div class="t" style="left:573.0px;width:30px;text-align:center;top:493px;font-size:11px;font-weight:normal;">1</div>
<div class="t" style="left:603.0px;width:30px;text-align:center;top:493px;font-size:11px;font-weight:normal;">0</div>
<div class="t" style="left:633.0px;width:30px;text-align:center;top:493px;font-size:11px;font-weight:normal;">1</div>
<div class="t" style="left:663.0px;width:30px;text-align:center;top:493px;font-size:11px;font-weight:normal;">0</div>
<div class="t" style="left:693.0px;width:30px;text-align:center;top:493px;font-size:11px;font-weight:normal;">L</div>
<div class="t" style="left:723.0px;width:30px;text-align:center;top:493px;font-size:11px;font-weight:normal;">L</div>
<div class="t" style="left:753.0px;width:30px;text-align:center;top:493px;font-size:11px;font-weight:normal;">V</div>
<div class="t" style="left:16px;top:507px;font-size:11px;font-weight:normal;color:#000;">Normal</div>
<div class="t" style="left:264.0px;width:40px;text-align:center;top:507px;font-size:11px;font-weight:normal;transform:scaleX(0.95);">0007</div>
<div class="t" style="left:303.0px;width:30px;text-align:center;top:507px;font-size:11px;font-weight:normal;">L</div>
<div class="t" style="left:333.0px;width:30px;text-align:center;top:507px;font-size:11px;font-weight:normal;">L</div>
<div class="t" style="left:363.0px;width:30px;text-align:center;top:507px;font-size:11px;font-weight:normal;">L</div>
<div class="t" style="left:393.0px;width:30px;text-align:center;top:507px;font-size:11px;font-weight:normal;">L</div>
<div class="t" style="left:423.0px;width:30px;text-align:center;top:507px;font-size:11px;font-weight:normal;">L</div>
<div class="t" style="left:453.0px;width:30px;text-align:center;top:507px;font-size:11px;font-weight:normal;">L</div>
<div class="t" style="left:483.0px;width:30px;text-align:center;top:507px;font-size:11px;font-weight:normal;">H</div>
<div class="t" style="left:513.0px;width:30px;text-align:center;top:507px;font-size:11px;font-weight:normal;">G</div>
<div class="t" style="left:543.0px;width:30px;text-align:center;top:507px;font-size:11px;font-weight:normal;">L</div>
<div class="t" style="left:573.0px;width:30px;text-align:center;top:507px;font-size:11px;font-weight:normal;">0</div>
<div class="t" style="left:603.0px;width:30px;text-align:center;top:507px;font-size:11px;font-weight:normal;">0</div>
<div class="t" style="left:633.0px;width:30px;text-align:center;top:507px;font-size:11px;font-weight:normal;">1</div>
<div class="t" style="left:663.0px;width:30px;text-align:center;top:507px;font-size:11px;font-weight:normal;">1</div>
<div class="t" style="left:693.0px;width:30px;text-align:center;top:507px;font-size:11px;font-weight:normal;">L</div>
<div class="t" style="left:723.0px;width:30px;text-align:center;top:507px;font-size:11px;font-weight:normal;">L</div>
<div class="t" style="left:753.0px;width:30px;text-align:center;top:507px;font-size:11px;font-weight:normal;">V</div>
<div class="t" style="left:16px;top:521px;font-size:11px;font-weight:normal;color:#000;">Normal</div>
<div class="t" style="left:264.0px;width:40px;text-align:center;top:521px;font-size:11px;font-weight:normal;transform:scaleX(0.95);">0008</div>
<div class="t" style="left:303.0px;width:30px;text-align:center;top:521px;font-size:11px;font-weight:normal;">L</div>
<div class="t" style="left:333.0px;width:30px;text-align:center;top:521px;font-size:11px;font-weight:normal;">L</div>
<div class="t" style="left:363.0px;width:30px;text-align:center;top:521px;font-size:11px;font-weight:normal;">L</div>
<div class="t" style="left:393.0px;width:30px;text-align:center;top:521px;font-size:11px;font-weight:normal;">H</div>
<div class="t" style="left:423.0px;width:30px;text-align:center;top:521px;font-size:11px;font-weight:normal;">L</div>
<div class="t" style="left:453.0px;width:30px;text-align:center;top:521px;font-size:11px;font-weight:normal;">L</div>
<div class="t" style="left:483.0px;width:30px;text-align:center;top:521px;font-size:11px;font-weight:normal;">L</div>
<div class="t" style="left:513.0px;width:30px;text-align:center;top:521px;font-size:11px;font-weight:normal;">G</div>
<div class="t" style="left:543.0px;width:30px;text-align:center;top:521px;font-size:11px;font-weight:normal;">L</div>
<div class="t" style="left:573.0px;width:30px;text-align:center;top:521px;font-size:11px;font-weight:normal;">1</div>
<div class="t" style="left:603.0px;width:30px;text-align:center;top:521px;font-size:11px;font-weight:normal;">0</div>
<div class="t" style="left:633.0px;width:30px;text-align:center;top:521px;font-size:11px;font-weight:normal;">1</div>
<div class="t" style="left:663.0px;width:30px;text-align:center;top:521px;font-size:11px;font-weight:normal;">1</div>
<div class="t" style="left:693.0px;width:30px;text-align:center;top:521px;font-size:11px;font-weight:normal;">L</div>
<div class="t" style="left:723.0px;width:30px;text-align:center;top:521px;font-size:11px;font-weight:normal;">L</div>
<div class="t" style="left:753.0px;width:30px;text-align:center;top:521px;font-size:11px;font-weight:normal;">V</div>
<div class="t" style="left:16px;top:535px;font-size:11px;font-weight:normal;color:#000;">Normal</div>
<div class="t" style="left:264.0px;width:40px;text-align:center;top:535px;font-size:11px;font-weight:normal;transform:scaleX(0.95);">0009</div>
<div class="t" style="left:303.0px;width:30px;text-align:center;top:535px;font-size:11px;font-weight:normal;">L</div>
<div class="t" style="left:333.0px;width:30px;text-align:center;top:535px;font-size:11px;font-weight:normal;">L</div>
<div class="t" style="left:363.0px;width:30px;text-align:center;top:535px;font-size:11px;font-weight:normal;">L</div>
<div class="t" style="left:393.0px;width:30px;text-align:center;top:535px;font-size:11px;font-weight:normal;">L</div>
<div class="t" style="left:423.0px;width:30px;text-align:center;top:535px;font-size:11px;font-weight:normal;">L</div>
<div class="t" style="left:453.0px;width:30px;text-align:center;top:535px;font-size:11px;font-weight:normal;">L</div>
<div class="t" style="left:483.0px;width:30px;text-align:center;top:535px;font-size:11px;font-weight:normal;">L</div>
<div class="t" style="left:513.0px;width:30px;text-align:center;top:535px;font-size:11px;font-weight:normal;">G</div>
<div class="t" style="left:543.0px;width:30px;text-align:center;top:535px;font-size:11px;font-weight:normal;">H</div>
<div class="t" style="left:573.0px;width:30px;text-align:center;top:535px;font-size:11px;font-weight:normal;">0</div>
<div class="t" style="left:603.0px;width:30px;text-align:center;top:535px;font-size:11px;font-weight:normal;">1</div>
<div class="t" style="left:633.0px;width:30px;text-align:center;top:535px;font-size:11px;font-weight:normal;">0</div>
<div class="t" style="left:663.0px;width:30px;text-align:center;top:535px;font-size:11px;font-weight:normal;">0</div>
<div class="t" style="left:693.0px;width:30px;text-align:center;top:535px;font-size:11px;font-weight:normal;">L</div>
<div class="t" style="left:723.0px;width:30px;text-align:center;top:535px;font-size:11px;font-weight:normal;">L</div>
<div class="t" style="left:753.0px;width:30px;text-align:center;top:535px;font-size:11px;font-weight:normal;">V</div>
<div class="t" style="left:16px;top:549px;font-size:11px;font-weight:normal;color:#000;">Normal</div>
<div class="t" style="left:264.0px;width:40px;text-align:center;top:549px;font-size:11px;font-weight:normal;transform:scaleX(0.95);">0010</div>
<div class="t" style="left:303.0px;width:30px;text-align:center;top:549px;font-size:11px;font-weight:normal;">L</div>
<div class="t" style="left:333.0px;width:30px;text-align:center;top:549px;font-size:11px;font-weight:normal;">L</div>
<div class="t" style="left:363.0px;width:30px;text-align:center;top:549px;font-size:11px;font-weight:normal;">L</div>
<div class="t" style="left:393.0px;width:30px;text-align:center;top:549px;font-size:11px;font-weight:normal;">L</div>
<div class="t" style="left:423.0px;width:30px;text-align:center;top:549px;font-size:11px;font-weight:normal;">H</div>
<div class="t" style="left:453.0px;width:30px;text-align:center;top:549px;font-size:11px;font-weight:normal;">L</div>
<div class="t" style="left:483.0px;width:30px;text-align:center;top:549px;font-size:11px;font-weight:normal;">L</div>
<div class="t" style="left:513.0px;width:30px;text-align:center;top:549px;font-size:11px;font-weight:normal;">G</div>
<div class="t" style="left:543.0px;width:30px;text-align:center;top:549px;font-size:11px;font-weight:normal;">L</div>
<div class="t" style="left:573.0px;width:30px;text-align:center;top:549px;font-size:11px;font-weight:normal;">1</div>
<div class="t" style="left:603.0px;width:30px;text-align:center;top:549px;font-size:11px;font-weight:normal;">1</div>
<div class="t" style="left:633.0px;width:30px;text-align:center;top:549px;font-size:11px;font-weight:normal;">0</div>
<div class="t" style="left:663.0px;width:30px;text-align:center;top:549px;font-size:11px;font-weight:normal;">0</div>
<div class="t" style="left:693.0px;width:30px;text-align:center;top:549px;font-size:11px;font-weight:normal;">L</div>
<div class="t" style="left:723.0px;width:30px;text-align:center;top:549px;font-size:11px;font-weight:normal;">L</div>
<div class="t" style="left:753.0px;width:30px;text-align:center;top:549px;font-size:11px;font-weight:normal;">V</div>
<div class="t" style="left:17px;top:563px;font-size:11px;font-weight:normal;color:#000;transform:scaleX(0.97);transform-origin:0 0;">All Vector Testing Normal</div>
<div style="position:absolute;left:264px;top:448px;width:518px;height:16px;box-sizing:border-box;border:1px solid #22a33a;"></div>
<div class="t" style="left:20px;top:612px;font-size:11px;font-weight:normal;color:#000;">Vector Table and Test Result</div>
<div style="position:absolute;left:226px;top:613px;width:75px;height:23px;box-sizing:border-box;border:1px solid #696969;"></div>
<div style="position:absolute;left:227px;top:614px;width:73px;height:21px;box-sizing:border-box;border-style:solid;border-width:1px;border-color:#fff #696969 #696969 #fff;background:#f0f0f0;box-shadow:inset 1px 1px 0 #e3e3e3, inset -1px -1px 0 #a0a0a0;"></div>
<div class="t" style="left:226.0px;width:75px;text-align:center;top:618px;font-size:11px;font-weight:normal;transform:scaleX(0.88);">TEST</div>
<div style="position:absolute;left:319px;top:613px;width:75px;height:23px;box-sizing:border-box;border-style:solid;border-width:1px;border-color:#fff #696969 #696969 #fff;background:#f0f0f0;box-shadow:inset 1px 1px 0 #e3e3e3, inset -1px -1px 0 #a0a0a0;"></div>
<div class="t" style="left:319.0px;width:75px;text-align:center;top:618px;font-size:11px;font-weight:normal;transform:scaleX(0.97);">Auto Find</div>
<div style="position:absolute;left:412px;top:613px;width:75px;height:23px;box-sizing:border-box;border-style:solid;border-width:1px;border-color:#fff #696969 #696969 #fff;background:#f0f0f0;box-shadow:inset 1px 1px 0 #e3e3e3, inset -1px -1px 0 #a0a0a0;"></div>
<div class="t" style="left:412.0px;width:75px;text-align:center;top:618px;font-size:11px;font-weight:normal;transform:scaleX(0.88);">BACK</div>
<div style="position:absolute;left:633px;top:624px;width:287px;height:11px;box-sizing:border-box;border-style:solid;border-width:1px;border-color:#a0a0a0 #fff #fff #a0a0a0;"></div>
<svg style="position:absolute;left:0;top:0" width="931" height="648"><rect x="704" y="66" width="31" height="14" fill="#777777"/><rect x="756" y="66" width="31" height="14" fill="#777777"/><rect x="704" y="319" width="31" height="14" fill="#777777"/><rect x="755" y="319" width="31" height="14" fill="#777777"/><path d="M689 80 H799 L801 82 V319 H687 V82 Z" fill="#777777"/><rect x="691" y="84" width="106" height="231" fill="#f0f0f0"/><rect x="741" y="84" width="10" height="231" fill="#8a8a8a"/><rect x="742" y="84" width="8" height="231" fill="#c8c8c8"/><circle cx="746" cy="275" r="4" fill="#c8c8c8" stroke="#999" stroke-width="1"/><rect x="699.5" y="102.5" width="32" height="4" fill="#fafafa" stroke="#555" stroke-width="1"/><rect x="759.5" y="102.5" width="32" height="4" fill="#fafafa" stroke="#555" stroke-width="1"/><rect x="701" y="104" width="29" height="1" fill="#e9e9e9"/><rect x="761" y="104" width="29" height="1" fill="#e9e9e9"/><rect x="699.5" y="112.5" width="32" height="4" fill="#fafafa" stroke="#555" stroke-width="1"/><rect x="759.5" y="112.5" width="32" height="4" fill="#fafafa" stroke="#555" stroke-width="1"/><rect x="701" y="114" width="29" height="1" fill="#e9e9e9"/><rect x="761" y="114" width="29" height="1" fill="#e9e9e9"/><rect x="699.5" y="122.5" width="32" height="4" fill="#fafafa" stroke="#555" stroke-width="1"/><rect x="759.5" y="122.5" width="32" height="4" fill="#fafafa" stroke="#555" stroke-width="1"/><rect x="701" y="124" width="29" height="1" fill="#e9e9e9"/><rect x="761" y="124" width="29" height="1" fill="#e9e9e9"/><rect x="699.5" y="132.5" width="32" height="4" fill="#fafafa" stroke="#555" stroke-width="1"/><rect x="759.5" y="132.5" width="32" height="4" fill="#fafafa" stroke="#555" stroke-width="1"/><rect x="701" y="134" width="29" height="1" fill="#e9e9e9"/><rect x="761" y="134" width="29" height="1" fill="#e9e9e9"/><rect x="699.5" y="142.5" width="32" height="4" fill="#fafafa" stroke="#555" stroke-width="1"/><rect x="759.5" y="142.5" width="32" height="4" fill="#fafafa" stroke="#555" stroke-width="1"/><rect x="701" y="144" width="29" height="1" fill="#e9e9e9"/><rect x="761" y="144" width="29" height="1" fill="#e9e9e9"/><rect x="699.5" y="152.5" width="32" height="4" fill="#fafafa" stroke="#555" stroke-width="1"/><rect x="759.5" y="152.5" width="32" height="4" fill="#fafafa" stroke="#555" stroke-width="1"/><rect x="701" y="154" width="29" height="1" fill="#e9e9e9"/><rect x="761" y="154" width="29" height="1" fill="#e9e9e9"/><rect x="699.5" y="162.5" width="32" height="4" fill="#fafafa" stroke="#555" stroke-width="1"/><rect x="759.5" y="162.5" width="32" height="4" fill="#fafafa" stroke="#555" stroke-width="1"/><rect x="701" y="164" width="29" height="1" fill="#e9e9e9"/><rect x="761" y="164" width="29" height="1" fill="#e9e9e9"/><rect x="699.5" y="172.5" width="32" height="4" fill="#fafafa" stroke="#555" stroke-width="1"/><rect x="759.5" y="172.5" width="32" height="4" fill="#fafafa" stroke="#555" stroke-width="1"/><rect x="701" y="174" width="29" height="1" fill="#e9e9e9"/><rect x="761" y="174" width="29" height="1" fill="#e9e9e9"/><rect x="699.5" y="182.5" width="32" height="4" fill="#fafafa" stroke="#555" stroke-width="1"/><rect x="759.5" y="182.5" width="32" height="4" fill="#fafafa" stroke="#555" stroke-width="1"/><rect x="701" y="184" width="29" height="1" fill="#e9e9e9"/><rect x="761" y="184" width="29" height="1" fill="#e9e9e9"/><rect x="699.5" y="192.5" width="32" height="4" fill="#fafafa" stroke="#555" stroke-width="1"/><rect x="759.5" y="192.5" width="32" height="4" fill="#fafafa" stroke="#555" stroke-width="1"/><rect x="701" y="194" width="29" height="1" fill="#e9e9e9"/><rect x="761" y="194" width="29" height="1" fill="#e9e9e9"/><rect x="699.5" y="202.5" width="32" height="4" fill="#fafafa" stroke="#555" stroke-width="1"/><rect x="759.5" y="202.5" width="32" height="4" fill="#fafafa" stroke="#555" stroke-width="1"/><rect x="701" y="204" width="29" height="1" fill="#e9e9e9"/><rect x="761" y="204" width="29" height="1" fill="#e9e9e9"/><rect x="699.5" y="212.5" width="32" height="4" fill="#fafafa" stroke="#555" stroke-width="1"/><rect x="759.5" y="212.5" width="32" height="4" fill="#fafafa" stroke="#555" stroke-width="1"/><rect x="701" y="214" width="29" height="1" fill="#e9e9e9"/><rect x="761" y="214" width="29" height="1" fill="#e9e9e9"/><rect x="699.5" y="222.5" width="32" height="4" fill="#fafafa" stroke="#555" stroke-width="1"/><rect x="759.5" y="222.5" width="32" height="4" fill="#fafafa" stroke="#555" stroke-width="1"/><rect x="701" y="224" width="29" height="1" fill="#e9e9e9"/><rect x="761" y="224" width="29" height="1" fill="#e9e9e9"/><rect x="699.5" y="232.5" width="32" height="4" fill="#fafafa" stroke="#555" stroke-width="1"/><rect x="759.5" y="232.5" width="32" height="4" fill="#fafafa" stroke="#555" stroke-width="1"/><rect x="701" y="234" width="29" height="1" fill="#e9e9e9"/><rect x="761" y="234" width="29" height="1" fill="#e9e9e9"/><rect x="699.5" y="242.5" width="32" height="4" fill="#fafafa" stroke="#555" stroke-width="1"/><rect x="759.5" y="242.5" width="32" height="4" fill="#fafafa" stroke="#555" stroke-width="1"/><rect x="701" y="244" width="29" height="1" fill="#e9e9e9"/><rect x="761" y="244" width="29" height="1" fill="#e9e9e9"/><rect x="699.5" y="252.5" width="32" height="4" fill="#fafafa" stroke="#555" stroke-width="1"/><rect x="759.5" y="252.5" width="32" height="4" fill="#fafafa" stroke="#555" stroke-width="1"/><rect x="701" y="254" width="29" height="1" fill="#e9e9e9"/><rect x="761" y="254" width="29" height="1" fill="#e9e9e9"/><rect x="699.5" y="262.5" width="32" height="4" fill="#fafafa" stroke="#555" stroke-width="1"/><rect x="759.5" y="262.5" width="32" height="4" fill="#fafafa" stroke="#555" stroke-width="1"/><rect x="701" y="264" width="29" height="1" fill="#e9e9e9"/><rect x="761" y="264" width="29" height="1" fill="#e9e9e9"/><rect x="699.5" y="272.5" width="32" height="4" fill="#fafafa" stroke="#555" stroke-width="1"/><rect x="759.5" y="272.5" width="32" height="4" fill="#fafafa" stroke="#555" stroke-width="1"/><rect x="701" y="274" width="29" height="1" fill="#e9e9e9"/><rect x="761" y="274" width="29" height="1" fill="#e9e9e9"/><rect x="699.5" y="282.5" width="32" height="4" fill="#fafafa" stroke="#555" stroke-width="1"/><rect x="759.5" y="282.5" width="32" height="4" fill="#fafafa" stroke="#555" stroke-width="1"/><rect x="701" y="284" width="29" height="1" fill="#e9e9e9"/><rect x="761" y="284" width="29" height="1" fill="#e9e9e9"/><rect x="699.5" y="292.5" width="32" height="4" fill="#fafafa" stroke="#555" stroke-width="1"/><rect x="759.5" y="292.5" width="32" height="4" fill="#fafafa" stroke="#555" stroke-width="1"/><rect x="701" y="294" width="29" height="1" fill="#e9e9e9"/><rect x="761" y="294" width="29" height="1" fill="#e9e9e9"/><path d="M726 103 H720.5 L718.3 104.5 L720.5 106 H726 Z" fill="#747474"/><path d="M766 103 H771.5 L773.7 104.5 L771.5 106 H766 Z" fill="#747474"/><path d="M726 113 H720.5 L718.3 114.5 L720.5 116 H726 Z" fill="#747474"/><path d="M766 113 H771.5 L773.7 114.5 L771.5 116 H766 Z" fill="#747474"/><path d="M726 123 H720.5 L718.3 124.5 L720.5 126 H726 Z" fill="#747474"/><path d="M766 123 H771.5 L773.7 124.5 L771.5 126 H766 Z" fill="#747474"/><path d="M726 133 H720.5 L718.3 134.5 L720.5 136 H726 Z" fill="#747474"/><path d="M766 133 H771.5 L773.7 134.5 L771.5 136 H766 Z" fill="#747474"/><path d="M726 143 H720.5 L718.3 144.5 L720.5 146 H726 Z" fill="#747474"/><path d="M766 143 H771.5 L773.7 144.5 L771.5 146 H766 Z" fill="#747474"/><path d="M726 153 H720.5 L718.3 154.5 L720.5 156 H726 Z" fill="#747474"/><path d="M766 153 H771.5 L773.7 154.5 L771.5 156 H766 Z" fill="#747474"/><path d="M726 163 H720.5 L718.3 164.5 L720.5 166 H726 Z" fill="#747474"/><path d="M766 163 H771.5 L773.7 164.5 L771.5 166 H766 Z" fill="#747474"/><path d="M726 173 H720.5 L718.3 174.5 L720.5 176 H726 Z" fill="#747474"/><path d="M766 173 H771.5 L773.7 174.5 L771.5 176 H766 Z" fill="#747474"/><rect x="725" y="101" width="42" height="77" fill="#8a8a8a"/><rect x="727" y="103" width="38" height="73" fill="#6e6e6e"/><path d="M740 101 V103 L742 108 H750 L752 103 V101 Z" fill="#8a8a8a"/><path d="M741 101 V102.5 L742.6 106 H749.4 L751 102.5 V101 Z" fill="#c8c8c8"/><circle cx="734" cy="112" r="3.7" fill="#bdbdbd"/><rect x="791" y="318" width="4" height="18" fill="#777777"/><path fill-rule="evenodd" d="M788.5 335 H797.5 L801 338.5 V354.5 L797.5 358 H788.5 L785 354.5 V338.5 Z M790.5 339 H795.5 L797 340.5 V352.5 L795.5 354 H790.5 L789 352.5 V340.5 Z" fill="#777777"/></svg>
<div class="t" style="left:726px;top:354px;font-size:13px;line-height:14px;font-weight:bold;letter-spacing:0.8px;transform:scaleY(1.08);transform-origin:0 100%;">ZIF40</div>
</body></html>
